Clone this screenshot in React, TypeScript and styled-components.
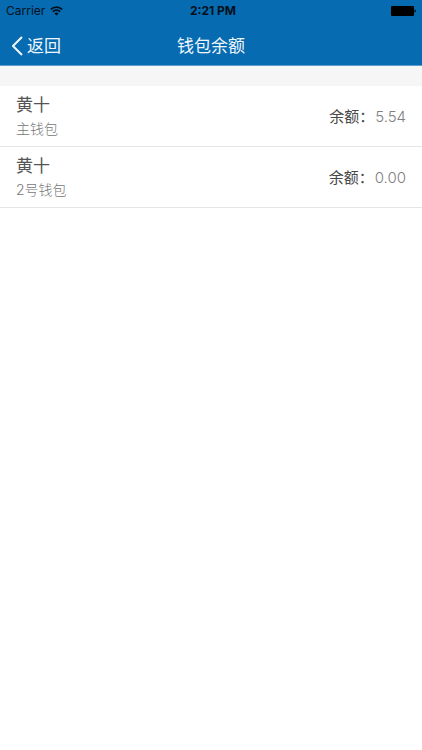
import React from 'react';
import styled, { createGlobalStyle } from 'styled-components';

const GlobalStyle = createGlobalStyle`
  * { box-sizing: border-box; }
  body {
    margin: 0;
    background: #fff;
    font-family: Inter, "Noto Sans CJK SC", sans-serif;
    font-weight: 400;
  }
`;

const Header = styled.header`
  background: #066bb1;
  border-bottom: 1px solid #5c9fce;
`;

const StatusBar = styled.div`
  display: grid;
  grid-template-columns: 1fr auto 1fr;
  align-items: center;
  height: 22px;
  padding: 0 6px;
  font-size: 12px;
  line-height: 22px;
  color: #04101c;
`;

const Carrier = styled.span`
  display: flex;
  align-items: center;
  gap: 5px;
`;

const Clock = styled.time`
  padding-left: 4px;
  font-weight: 700;
`;

const Battery = styled.svg`
  justify-self: end;
`;

const NavBar = styled.nav`
  display: grid;
  grid-template-columns: 1fr auto 1fr;
  align-items: center;
  height: 43px;
  padding: 5px 12px 0;
`;

const BackButton = styled.button`
  display: flex;
  align-items: center;
  justify-self: start;
  gap: 4px;
  padding: 0;
  border: 0;
  background: none;
  color: #eef6fc;
  font-family: inherit;
  font-size: 17px;
  line-height: 24px;
  cursor: pointer;
`;

const Title = styled.h1`
  margin: 0;
  color: #eef6fc;
  font-size: 17px;
  font-weight: 400;
  line-height: 24px;
`;

const List = styled.ul`
  margin: 0;
  padding: 0;
  border-top: 20px solid #f6f6f6;
  list-style: none;
`;

const Row = styled.li`
  display: flex;
  align-items: center;
  justify-content: space-between;
  height: 61px;
  padding: 2px 16px 0;
  border-bottom: 1px solid #e5e5e5;
`;

const Owner = styled.div`
  color: #555;
  font-size: 17px;
  line-height: 24px;
`;

const Wallet = styled.div`
  color: #777;
  font-size: 14px;
  font-weight: 300;
  line-height: 24px;
`;

const Balance = styled.div`
  display: flex;
  gap: 1px;
  color: #484848;
  font-size: 15px;
  line-height: 24px;
`;

const Amount = styled.span`
  color: #808080;
  font-weight: 300;
`;

const wallets = [
  { owner: '黄十', name: '主钱包', balance: '5.54' },
  { owner: '黄十', name: '2号钱包', balance: '0.00' },
];

export default function App() {
  return (
    <>
      <GlobalStyle />
      <Header>
        <StatusBar>
          <Carrier>
            Carrier
            <svg width="13" height="10" viewBox="0 0 13 10" fill="none" stroke="currentColor" strokeWidth="1.8" aria-hidden="true">
              <path d="M.8 3.4a8.2 8.2 0 0 1 11.4 0M2.8 5.7a5.2 5.2 0 0 1 7.4 0" />
              <path d="M6.5 9.6 4.4 7.5a3 3 0 0 1 4.2 0Z" fill="currentColor" stroke="none" />
            </svg>
          </Carrier>
          <Clock>2:21 PM</Clock>
          <Battery width="25" height="10" viewBox="0 0 25 10" aria-hidden="true">
            <rect width="23" height="10" rx="1" fill="#000" />
            <path d="M23.5 3.5q1.5.3 1.5 1.5t-1.5 1.5Z" fill="#000" />
          </Battery>
        </StatusBar>
        <NavBar>
          <BackButton type="button">
            <svg width="11" height="20" viewBox="0 0 11 20" fill="none" stroke="currentColor" strokeWidth="2" aria-hidden="true">
              <path d="m10 1-9 9 9 9" />
            </svg>
            返回
          </BackButton>
          <Title>钱包余额</Title>
        </NavBar>
      </Header>
      <main>
        <List>
          {wallets.map((wallet) => (
            <Row key={wallet.name}>
              <div>
                <Owner>{wallet.owner}</Owner>
                <Wallet>{wallet.name}</Wallet>
              </div>
              <Balance>
                余额：<Amount>{wallet.balance}</Amount>
              </Balance>
            </Row>
          ))}
        </List>
      </main>
    </>
  );
}
